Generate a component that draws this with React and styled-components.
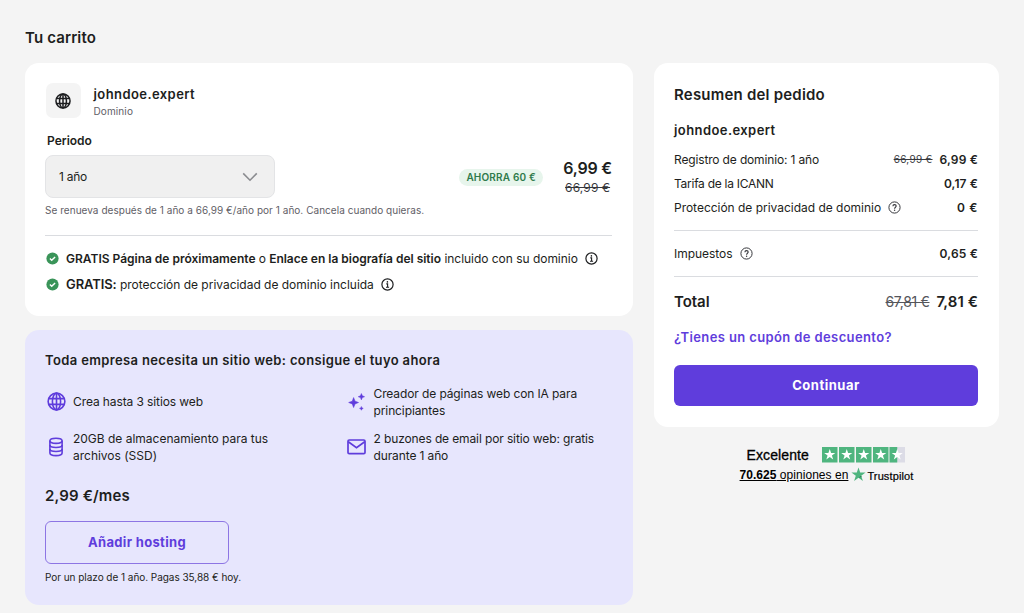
import React from 'react';
import styled, { createGlobalStyle, css } from 'styled-components';

const colors = {
  page: '#f4f4f4',
  dark: '#1d1e20',
  gray: '#5f6066',
  border: '#dadce0',
  primary: '#5f3ddc',
  primaryLight: '#e7e6fd',
  success: '#3a9459',
  successLight: '#e7f5ec',
};

const GlobalStyle = createGlobalStyle`
  * {
    box-sizing: border-box;
  }
  body {
    margin: 0;
    background: ${colors.page};
    color: ${colors.dark};
    font-family: Inter, sans-serif;
  }
`;

const Page = styled.main`
  padding: 27px 25px 8px;
`;

const Columns = styled.div`
  display: grid;
  grid-template-columns: 608px 345px;
  column-gap: 21px;
  align-items: start;
  margin-top: 15px;
`;

const Stack = styled.div`
  display: grid;
  row-gap: 14px;
`;

const Text = styled.span`
  font-size: ${props => props.$size || 12}px;
  font-weight: ${props => props.$weight || 400};
  letter-spacing: ${props => props.$track || 0}px;
  color: ${props => props.$color || 'inherit'};
  white-space: pre;
  ${props =>
    props.$strike &&
    css`
      text-decoration: line-through;
    `};
`;

const Title = styled.h1`
  margin: 0;
  font-size: 15px;
  line-height: 21px;
  font-weight: 600;
  letter-spacing: 0.13px;
`;

const Card = styled.section`
  height: 252.5px;
  padding: 20px 21px 0 20px;
  background: #fff;
  border-radius: 14px;
`;

const Product = styled.div`
  display: flex;
  gap: 13px;
  height: 35px;
  padding-left: 1px;
`;

const ProductIcon = styled.div`
  display: flex;
  align-items: center;
  justify-content: center;
  width: 34.5px;
  height: 35px;
  border-radius: 7px;
  background: ${colors.page};
`;

const ProductName = styled.div`
  display: flex;
  flex-direction: column;
  line-height: 17px;
  padding-top: 3px;
`;

const Label = styled.div`
  margin: 13px 0 4px 2px;
  line-height: 20px;
  font-size: 12px;
  font-weight: 600;
`;

const PeriodRow = styled.div`
  display: flex;
  align-items: flex-end;
  height: 43px;
`;

const Select = styled.button`
  display: flex;
  align-items: center;
  justify-content: space-between;
  width: 229.5px;
  height: 43px;
  margin-right: auto;
  padding: 0 16px 0 13px;
  border: 1px solid #e3e4e6;
  border-radius: 8px;
  background: #f0f0f0;
  color: inherit;
  font-family: inherit;
`;

const Badge = styled.div`
  height: 17px;
  width: 84px;
  margin: 0 20px 12px 0;
  border-radius: 9px;
  background: ${colors.successLight};
  color: #2f7a4b;
  font-size: 10px;
  line-height: 17px;
  font-weight: 600;
  letter-spacing: 0.18px;
  text-align: center;
`;

const Price = styled.div`
  display: flex;
  flex-direction: column;
  align-items: center;
  line-height: 20px;
`;

const Note = styled.div`
  margin-top: ${props => props.$top}px;
  line-height: 16px;
  font-size: 10px;
  letter-spacing: ${props => props.$track}px;
  color: ${props => props.$color};
`;

const Divider = styled.hr`
  height: 1px;
  margin: ${props => props.$margin};
  border: 0;
  background: ${colors.border};
`;

const Perk = styled.div`
  display: flex;
  align-items: center;
  height: 26px;
  padding-left: 1px;

  > svg:first-child {
    margin-right: 7px;
  }
  > svg:last-child {
    margin-left: 7px;
  }
`;

const HostingCard = styled.section`
  height: 275px;
  padding: 20px;
  background: ${colors.primaryLight};
  border-radius: 14px;
`;

const HostingTitle = styled.h2`
  margin: 0;
  font-size: 13px;
  line-height: 20px;
  font-weight: 600;
  letter-spacing: 0.36px;
`;

const Features = styled.div`
  display: grid;
  grid-template-columns: 300.5px 1fr;
  grid-auto-rows: 34px;
  row-gap: 11px;
  margin-top: 15px;
`;

const Feature = styled.div`
  display: flex;
  align-items: center;
  gap: 6px;
  width: 256px;
`;

const FeatureIcon = styled.div`
  display: flex;
  flex: none;
  justify-content: center;
  width: 22px;
  color: ${colors.primary};
`;

const FeatureText = styled.div`
  font-size: 12px;
  line-height: 17px;
  letter-spacing: ${props => props.$track}px;
`;

const MonthlyPrice = styled.div`
  margin: 22px 0 15px;
  font-size: 15px;
  line-height: 20px;
  font-weight: 600;
  letter-spacing: 0.15px;
`;

const Button = styled.button`
  display: block;
  width: 100%;
  height: 41px;
  padding: 0;
  border: 0;
  border-radius: 6px;
  background: ${colors.primary};
  color: #fff;
  font-family: inherit;
  font-size: 13px;
  font-weight: 700;
  letter-spacing: 0.5px;
`;

const OutlineButton = styled(Button)`
  width: 184px;
  height: 43px;
  border: 1px solid #8d75e4;
  background: transparent;
  color: ${colors.primary};
  letter-spacing: 0.33px;
`;

const Summary = styled.section`
  height: 364px;
  padding: 22px 21px 0 20px;
  background: #fff;
  border-radius: 14px;
`;

const SummaryTitle = styled.h2`
  margin: 0 0 15px;
  font-size: 15px;
  line-height: 20px;
  font-weight: 600;
  letter-spacing: 0.21px;
`;

const SummaryItem = styled.h3`
  margin: 0 0 7px;
  font-size: 13px;
  line-height: 20px;
  font-weight: 600;
  letter-spacing: 0.42px;
`;

const Row = styled.div`
  display: flex;
  align-items: center;
  justify-content: space-between;
  height: 24px;
`;

const Group = styled.div`
  display: flex;
  align-items: center;
  gap: 7px;
`;

const Coupon = styled.a`
  display: block;
  margin: 14px 0 17.5px;
  color: ${colors.primary};
  font-size: 13px;
  line-height: 20px;
  font-weight: 600;
  letter-spacing: 0.38px;
`;

const Rating = styled.div`
  display: flex;
  flex-direction: column;
  align-items: center;
  margin-top: 18px;
  color: #000;
  font-family: 'Liberation Sans', Arial, sans-serif;
`;

const RatingLine = styled.div`
  display: flex;
  align-items: center;
  height: ${props => props.$height}px;
  font-size: ${props => props.$size}px;
`;

const Score = styled.span`
  margin-right: 13.5px;
  letter-spacing: 0.1px;
  -webkit-text-stroke: 0.3px #000;
`;

const Reviews = styled.a`
  margin-right: 3px;
  text-decoration: underline;
  letter-spacing: 0.04px;
`;

const Trustpilot = styled.span`
  font-size: 11px;
  margin-left: 1px;
  padding-top: 2px;
  letter-spacing: 0.12px;
  -webkit-text-stroke: 0.2px #000;
`;

const GlobeIcon = ({ size, stroke = 1.9 }) => (
  <svg
    width={size}
    height={size}
    viewBox="0 0 20 20"
    fill="none"
    stroke="currentColor"
    strokeWidth={stroke}
  >
    <circle cx="10" cy="10" r="8.8" />
    <ellipse cx="10" cy="10" rx="4.3" ry="8.8" />
    <path d="M10 1.2v17.6M1.8 7h16.4M1.8 13h16.4" />
  </svg>
);

const ChevronIcon = () => (
  <svg width="16" height="10" viewBox="0 0 16 10" fill="none">
    <path d="M1.2 1.4 8 8.2l6.8-6.8" stroke="#8b8c90" strokeWidth="1.6" />
  </svg>
);

const CheckIcon = () => (
  <svg width="13" height="13" viewBox="0 0 13 13" fill="none">
    <circle cx="6.5" cy="6.5" r="6.1" fill={colors.success} />
    <path d="m3.9 6.6 1.8 1.7 3.4-3.4" stroke="#fff" strokeWidth="1.4" />
  </svg>
);

const InfoIcon = () => (
  <svg width="13" height="13" viewBox="0 0 13 13" fill="none" stroke={colors.dark}>
    <circle cx="6.5" cy="6.5" r="5.6" strokeWidth="1.2" />
    <path d="M5.3 5.9h1.3v3.3M5 9.3h3.1" strokeWidth="1.1" />
    <circle cx="6.4" cy="3.9" r="0.8" fill={colors.dark} stroke="none" />
  </svg>
);

const HelpIcon = () => (
  <svg width="13" height="13" viewBox="0 0 13 13" fill="none" stroke="#36373c">
    <circle cx="6.5" cy="6.5" r="5.6" />
    <path d="M4.9 5.2c0-2.2 3.3-2.1 3.3-.1 0 1.2-1.6 1.2-1.6 2.6" strokeWidth="1.1" />
    <circle cx="6.6" cy="9.3" r="0.7" fill="#36373c" stroke="none" />
  </svg>
);

const StorageIcon = () => (
  <svg
    width="16"
    height="20"
    viewBox="0 0 16 20"
    fill="none"
    stroke="currentColor"
    strokeWidth="1.6"
  >
    <ellipse cx="8" cy="3.8" rx="6.1" ry="2.6" />
    <path d="M1.9 3.8v12.2c0 1.5 2.7 2.6 6.1 2.6s6.1-1.1 6.1-2.6V3.8" />
    <path d="M1.9 8c0 1.5 2.7 2.5 6.1 2.5s6.1-1 6.1-2.5M1.9 12c0 1.5 2.7 2.5 6.1 2.5s6.1-1 6.1-2.5" />
  </svg>
);

const SparklesIcon = () => (
  <svg
    width="18"
    height="18"
    viewBox="0 0 18 18"
    fill="currentColor"
    stroke="currentColor"
    strokeWidth="0.6"
    strokeLinejoin="round"
  >
    <path d="M5.6 4.6 7 8.2l3.5 1.3L7 10.9l-1.4 3.6-1.3-3.6L.7 9.5l3.6-1.3z" />
    <path d="m13.4.6.9 2.2 2.2.9-2.2.9-.9 2.2-.9-2.2-2.2-.9 2.2-.9z" />
    <path d="m13.4 13.6.5 1.3 1.3.5-1.3.5-.5 1.3-.5-1.3-1.3-.5 1.3-.5z" />
  </svg>
);

const MailIcon = () => (
  <svg
    width="19"
    height="16"
    viewBox="0 0 19 16"
    fill="none"
    stroke="currentColor"
    strokeWidth="1.7"
  >
    <rect x="1" y="1" width="17" height="13.6" rx="1.2" />
    <path d="m1.3 2.8 8.2 5.8 8.2-5.8" />
  </svg>
);

const starPath = 'M7.75 2 9.1 6h4.2L9.9 8.4l1.3 4.1-3.45-2.5-3.45 2.5 1.3-4.1L2.2 6h4.2z';

const StarsIcon = () => (
  <svg width="84" height="16" viewBox="0 0 84 16">
    {[0, 17, 34, 51, 67.5].map(x => (
      <g key={x} transform={`translate(${x} 0)`}>
        <rect width="15.5" height="15.5" fill={x === 67.5 ? '#dcdce6' : '#4fb57f'} />
        {x === 67.5 && <rect width="7.75" height="15.5" fill="#4fb57f" />}
        <path d={starPath} fill="#fff" />
      </g>
    ))}
  </svg>
);

const TrustpilotStar = () => (
  <svg width="15" height="15" viewBox="0 0 15 15">
    <path
      d="M7.5.4 9.2 5.5h5.4l-4.4 3.2 1.7 5.2-4.4-3.2-4.4 3.2 1.7-5.2L.4 5.5h5.4z"
      fill="#4fb57f"
    />
    <path d="m10.2 8.7.4 1.3-3.1.7z" fill="#2c7450" />
  </svg>
);

const features = [
  { icon: <GlobeIcon size={19} stroke={1.7} />, text: 'Crea hasta 3 sitios web', track: -0.1 },
  { icon: <SparklesIcon />, text: 'Creador de páginas web con IA para principiantes', track: -0.11 },
  { icon: <StorageIcon />, text: '20GB de almacenamiento para tus archivos (SSD)', track: -0.01 },
  { icon: <MailIcon />, text: '2 buzones de email por sitio web: gratis durante 1 año', track: -0.12 },
];

const App = () => (
  <Page>
    <GlobalStyle />
    <Title>Tu carrito</Title>
    <Columns>
      <Stack>
        <Card>
          <Product>
            <ProductIcon>
              <GlobeIcon size={16} />
            </ProductIcon>
            <ProductName>
              <Text $size={13} $weight={600} $track={0.42}>
                johndoe.expert
              </Text>
              <Text $size={10} $track={0.11} $color={colors.gray}>
                Dominio
              </Text>
            </ProductName>
          </Product>
          <Label>Periodo</Label>
          <PeriodRow>
            <Select>
              <Text $track={-0.26}>1 año</Text>
              <ChevronIcon />
            </Select>
            <Badge>AHORRA 60 €</Badge>
            <Price>
              <Text $size={16} $weight={600} $track={-0.2}>
                6,99 €
              </Text>
              <Text $track={0.13} $color="#36373c" $strike>
                66,99 €
              </Text>
            </Price>
          </PeriodRow>
          <Note $top={4} $track={0.04} $color={colors.gray}>
            Se renueva después de 1 año a 66,99 €/año por 1 año. Cancela cuando quieras.
          </Note>
          <Divider $margin="17px 0 9px" />
          <Perk>
            <CheckIcon />
            <Text $weight={600} $track={-0.01}>
              GRATIS Página de próximamente
            </Text>
            <Text $track={-0.1}> o </Text>
            <Text $weight={600} $track={-0.01}>
              Enlace en la biografía del sitio
            </Text>
            <Text $track={-0.03}> incluido con su dominio</Text>
            <InfoIcon />
          </Perk>
          <Perk>
            <CheckIcon />
            <Text $size={13} $weight={600} $track={-0.1}>
              GRATIS:
            </Text>
            <Text $track={-0.02}> protección de privacidad de dominio incluida</Text>
            <InfoIcon />
          </Perk>
        </Card>
        <HostingCard>
          <HostingTitle>
            Toda empresa necesita un sitio web: consigue el tuyo ahora
          </HostingTitle>
          <Features>
            {features.map(({ icon, text, track }) => (
              <Feature key={text}>
                <FeatureIcon>{icon}</FeatureIcon>
                <FeatureText $track={track}>{text}</FeatureText>
              </Feature>
            ))}
          </Features>
          <MonthlyPrice>2,99 €/mes</MonthlyPrice>
          <OutlineButton>Añadir hosting</OutlineButton>
          <Note $top={5} $track={-0.04} $color={colors.dark}>
            Por un plazo de 1 año. Pagas 35,88 € hoy.
          </Note>
        </HostingCard>
      </Stack>
      <div>
        <Summary>
          <SummaryTitle>Resumen del pedido</SummaryTitle>
          <SummaryItem>johndoe.expert</SummaryItem>
          <Row>
            <Text $track={-0.15}>Registro de dominio: 1 año</Text>
            <Group>
              <Text $size={10} $track={0.3} $color="#36373c" $strike>
                66,99 €
              </Text>
              <Text $weight={600} $track={0.16}>
                6,99 €
              </Text>
            </Group>
          </Row>
          <Row>
            <Text $track={-0.27}>Tarifa de la ICANN</Text>
            <Text $weight={600} $track={0.1}>
              0,17 €
            </Text>
          </Row>
          <Row>
            <Group>
              <Text $track={-0.02}>Protección de privacidad de dominio</Text>
              <HelpIcon />
            </Group>
            <Text $weight={600} $track={0.6}>
              0 €
            </Text>
          </Row>
          <Divider $margin="11px 0 10px" />
          <Row>
            <Group>
              <Text $track={-0.04}>Impuestos</Text>
              <HelpIcon />
            </Group>
            <Text $weight={600} $track={0.17}>
              0,65 €
            </Text>
          </Row>
          <Divider $margin="11px 0 12px" />
          <Row>
            <Text $size={15} $weight={600} $track={-0.05}>
              Total
            </Text>
            <Group>
              <Text $size={14} $track={-0.31} $color="#55565b" $strike>
                67,81 €
              </Text>
              <Text $size={15} $weight={600} $track={0.07}>
                7,81 €
              </Text>
            </Group>
          </Row>
          <Coupon>¿Tienes un cupón de descuento?</Coupon>
          <Button>Continuar</Button>
        </Summary>
        <Rating>
          <RatingLine $height={20} $size={14}>
            <Score>Excelente</Score>
            <StarsIcon />
          </RatingLine>
          <RatingLine $height={19} $size={12}>
            <Reviews>
              <b>70.625</b> opiniones en
            </Reviews>
            <TrustpilotStar />
            <Trustpilot>Trustpilot</Trustpilot>
          </RatingLine>
        </Rating>
      </div>
    </Columns>
  </Page>
);

export default App;
